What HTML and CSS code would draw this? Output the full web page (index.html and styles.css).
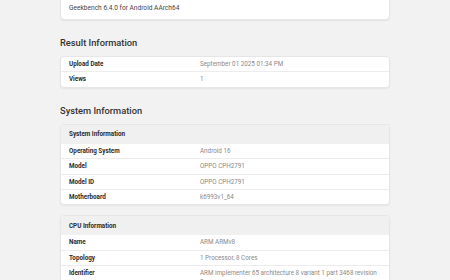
FILE: index.html
```html
<!DOCTYPE html>
<html>
<head>
<meta charset="utf-8">
<title>Geekbench Result</title>
<link rel="stylesheet" href="styles.css">
</head>
<body>

   <div class="page">

      <!-- version card, mostly scrolled out of view -->
      <div class="card intro">
         Geekbench 6.4.0 for Android AArch64
      </div>

      <h2 class="section_title">Result Information</h2>
      <div class="card">
         <div class="row">
            <div class="label">Upload Date</div>
            <div class="value">September 01 2025 01:34 PM</div>
         </div>
         <div class="row">
            <div class="label">Views</div>
            <div class="value">1</div>
         </div>
      </div>

      <h2 class="section_title">System Information</h2>
      <div class="card">
         <div class="card_header">System Information</div>
         <div class="row">
            <div class="label">Operating System</div>
            <div class="value">Android 16</div>
         </div>
         <div class="row">
            <div class="label">Model</div>
            <div class="value">OPPO CPH2791</div>
         </div>
         <div class="row">
            <div class="label">Model ID</div>
            <div class="value">OPPO CPH2791</div>
         </div>
         <div class="row">
            <div class="label">Motherboard</div>
            <div class="value">k6993v1_64</div>
         </div>
      </div>

      <div class="card">
         <div class="card_header">CPU Information</div>
         <div class="row">
            <div class="label">Name</div>
            <div class="value">ARM ARMv8</div>
         </div>
         <div class="row">
            <div class="label">Topology</div>
            <div class="value">1 Processor, 8 Cores</div>
         </div>
         <div class="row">
            <div class="label">Identifier</div>
            <div class="value">ARM implementer 65 architecture 8 variant 1 part 3468 revision 0</div>
         </div>
      </div>

   </div> <!-- end of page -->

</body>
</html>
```

FILE: styles.css
```css
body
{
   margin: 0 ;
   background-color: #f2f2f2 ;
   font-family: Roboto, "Liberation Sans", sans-serif ;
   color: #2b2b2b ;
   overflow: hidden ;
}

.page
{
   width: 330px ;
   margin: -4px 0 0 60px ;
}

.card
{
   background-color: #ffffff ;
   border: 1px solid #e6e6e6 ;
   border-radius: 4px ;
   box-shadow: 0 1px 2px rgba( 0, 0, 0, 0.06 ) ;
   overflow: hidden ;
   margin-bottom: 10px ;
}

.intro
{
   padding: 7px 8px 7px ;
   font-size: 6.6px ;
   line-height: 8px ;
   color: #444 ;
}

.section_title
{
   margin: 17px 0 7px ;
   font-size: 9.3px ;
   line-height: 12px ;
   font-weight: 500 ;
   color: #333 ;
}

.card_header
{
   padding: 5.5px 8px ;
   font-size: 6.3px ;
   line-height: 8px ;
   font-weight: 700 ;
   background-color: #f0f0f0 ;
}

.row
{
   display: flex ;
   padding: 3px 8px ;
   font-size: 6.3px ;
   line-height: 8.4px ;
   border-top: 1px solid #ececec ;
}

.card_header + .row,
.row:first-child
{
   border-top: none ;
}

.label
{
   width: 131px ;
   flex: none ;
   font-weight: 700 ;
   color: #2b2b2b ;
}

.value
{
   flex: 1 ;
   color: #8a8a8a ;
}
```
